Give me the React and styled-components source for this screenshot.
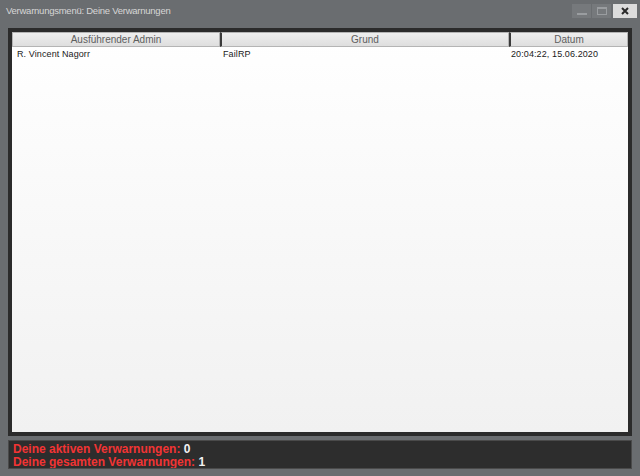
import React from 'react';
import styled, { createGlobalStyle } from 'styled-components';

const GlobalStyle = createGlobalStyle`
    html, body {
        margin: 0;
        padding: 0;
        background: #6a6d70;
    }
`;

const Window = styled.div`
    width: 640px;
    height: 476px;
    display: flex;
    flex-direction: column;
    background: #6a6d70;
    font-family: 'Liberation Sans', Arial, sans-serif;
    overflow: hidden;
`;

const TitleBar = styled.div`
    height: 26px;
    display: flex;
    align-items: flex-start;
    justify-content: space-between;
    box-sizing: border-box;
`;

const Title = styled.div`
    padding: 5px 0 0 6px;
    font-size: 9.5px;
    letter-spacing: -0.25px;
    color: #d6d6d6;
`;

const Controls = styled.div`
    display: flex;
    gap: 1px;
    padding: 4px 3px 0 0;
`;

const ControlButton = styled.div`
    width: ${p => p.$wide ? 24 : 19}px;
    height: 14px;
    display: flex;
    align-items: center;
    justify-content: center;
    background: ${p => p.$close ? '#dcdcdc' : '#76797c'};
    margin-left: ${p => p.$close ? 1 : 0}px;
`;

const ListFrame = styled.div`
    margin: 2px 8px 0;
    border: 4px solid #2b2b2b;
    height: 400px;
    background: linear-gradient(#ffffff, #f1f1f1);
`;

const Grid = styled.div`
    display: grid;
    grid-template-columns: 208px 289px 1fr;
    font-size: 9px;
    color: #1a1a1a;
`;

const HeadCell = styled.div`
    height: 13px;
    line-height: 13px;
    font-size: 10px;
    text-align: center;
    color: #5e5e5e;
    background: linear-gradient(#eeeeee, #dedede);
    border: 1px solid #b4b4b4;
    border-left: ${p => p.$first ? '1px solid #b4b4b4' : '2px solid #3a3a3a'};
`;

const Cell = styled.div`
    height: 13px;
    line-height: 13px;
    padding: 1px 0 0 ${p => p.$pad}px;
    white-space: nowrap;
    letter-spacing: 0.1px;
`;

const Footer = styled.div`
    margin: 4px 8px 7px;
    height: 29px;
    box-sizing: border-box;
    background: #2d2d2d;
    border: 1px solid #4a4a4a;
    padding: 2px 0 0 4px;
    font-size: 12px;
    font-weight: bold;
    line-height: 13px;
    overflow: hidden;
`;

const StatLine = styled.div`
    color: #f23434;
`;

const StatValue = styled.span`
    color: #f2f2f2;
`;

const columns = [
    { title: 'Ausführender Admin', pad: 5 },
    { title: 'Grund', pad: 3 },
    { title: 'Datum', pad: 2 },
];

const warnings = [
    ['R. Vincent Nagorr', 'FailRP', '20:04:22, 15.06.2020'],
];

const App = () => {
    return (
        <>
            <GlobalStyle />
            <Window>
                <TitleBar>
                    <Title>Verwarnungsmenü: Deine Verwarnungen</Title>
                    <Controls>
                        <ControlButton>
                            <svg width="10" height="8" viewBox="0 0 10 8">
                                <rect x="0" y="6" width="10" height="2" fill="#9a9da0" />
                            </svg>
                        </ControlButton>
                        <ControlButton>
                            <svg width="10" height="8" viewBox="0 0 10 8">
                                <rect x="0.5" y="0.5" width="9" height="7" fill="none" stroke="#9a9da0" />
                                <rect x="0.5" y="0.5" width="9" height="1.5" fill="#9a9da0" />
                            </svg>
                        </ControlButton>
                        <ControlButton $wide $close>
                            <svg width="8" height="8" viewBox="0 0 8 8">
                                <path d="M1 1 L7 7 M7 1 L1 7" stroke="#2a2a2a" strokeWidth="2" />
                            </svg>
                        </ControlButton>
                    </Controls>
                </TitleBar>

                <ListFrame>
                    <Grid>
                        {columns.map((c, i) => (
                            <HeadCell key={c.title} $first={i === 0}>{c.title}</HeadCell>
                        ))}
                        {warnings.map((row, r) =>
                            row.map((value, i) => (
                                <Cell key={`${r}-${i}`} $pad={columns[i].pad}>{value}</Cell>
                            ))
                        )}
                    </Grid>
                </ListFrame>

                <Footer>
                    <StatLine>Deine aktiven Verwarnungen: <StatValue>0</StatValue></StatLine>
                    <StatLine>Deine gesamten Verwarnungen: <StatValue>1</StatValue></StatLine>
                </Footer>
            </Window>
        </>
    );
};

export default App;
